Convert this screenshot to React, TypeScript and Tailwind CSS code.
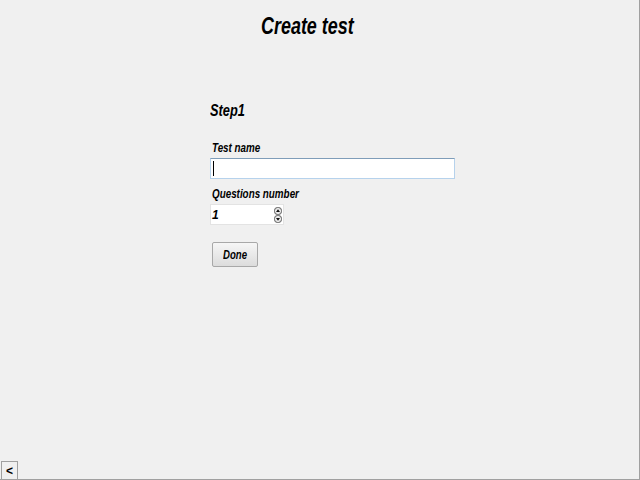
import React from 'react';

const font = { fontFamily: "'Liberation Sans', Arial, sans-serif" };

function Narrow({ children, k = 'scale-x-[0.82]' }: { children: React.ReactNode; k?: string }) {
  return <span className={`inline-block origin-left whitespace-nowrap ${k}`}>{children}</span>;
}

export default function App() {
  return (
    <div
      style={font}
      className="w-[640px] h-[480px] bg-[#f0f0f0] border-r border-b border-[#a0a0a0] flex flex-col text-black italic font-bold overflow-hidden"
    >
      {/* Title */}
      <div className="pl-[261px] pt-[12px] h-[40px] text-[23px] leading-[28px]">
        <span className="inline-block origin-left whitespace-nowrap scale-x-[0.78]">Create test</span>
      </div>

      {/* Form */}
      <div className="ml-[210px] mt-[61px] flex flex-col flex-1">
        <div className="text-[16px] leading-[20px] h-[20px]">
          <span className="inline-block origin-left whitespace-nowrap scale-x-[0.8]">Step1</span>
        </div>
        <div className="mt-[20px] pl-[2px] text-[12px] leading-[14px] h-[14px]">
          <Narrow>Test name</Narrow>
        </div>
        <div className="mt-[3px] w-[245px] h-[21px] bg-white border border-[#b6d2ec] border-t-[#7f9db9] flex items-center pl-[2px]">
          <div className="w-[1px] h-[15px] bg-black" />
        </div>
        <div className="mt-[8px] pl-[2px] text-[12px] leading-[14px] h-[14px]">
          <Narrow>Questions number</Narrow>
        </div>
        <div className="mt-[3px] w-[74px] h-[21px] bg-white border border-[#e3e3e3] flex items-center justify-between pl-[1px] pr-[1px]">
          <span className="text-[12px] leading-[14px]">1</span>
          <div className="flex flex-col">
            <svg width="8" height="8" viewBox="0 0 8 8">
              <rect x="0.5" y="0.5" width="7" height="7" rx="3" fill="#e8e8e8" stroke="#5a5a5a" />
              <path d="M2 5 L4 2.2 L6 5 Z" fill="#111" />
            </svg>
            <svg width="8" height="8" viewBox="0 0 8 8">
              <rect x="0.5" y="0.5" width="7" height="7" rx="3" fill="#e8e8e8" stroke="#5a5a5a" />
              <path d="M2 3 L4 5.8 L6 3 Z" fill="#111" />
            </svg>
          </div>
        </div>
        <button
          className="mt-[17px] ml-[2px] w-[46px] h-[25px] rounded-[2px] border border-[#a8a8a8] bg-gradient-to-b from-[#f6f6f6] to-[#dcdcdc] text-[12px] leading-[14px] italic font-bold flex items-center justify-center"
          style={font}
        >
          <span className="inline-block whitespace-nowrap scale-x-[0.8]">Done</span>
        </button>
        <div className="flex-1" />
        <div className="-ml-[209px] w-[17px] h-[18px] border border-[#a0a0a0] border-b-0 bg-[#f0f0f0] flex items-center justify-center text-[12px] leading-[12px] not-italic">
          &lt;
        </div>
      </div>
    </div>
  );
}
